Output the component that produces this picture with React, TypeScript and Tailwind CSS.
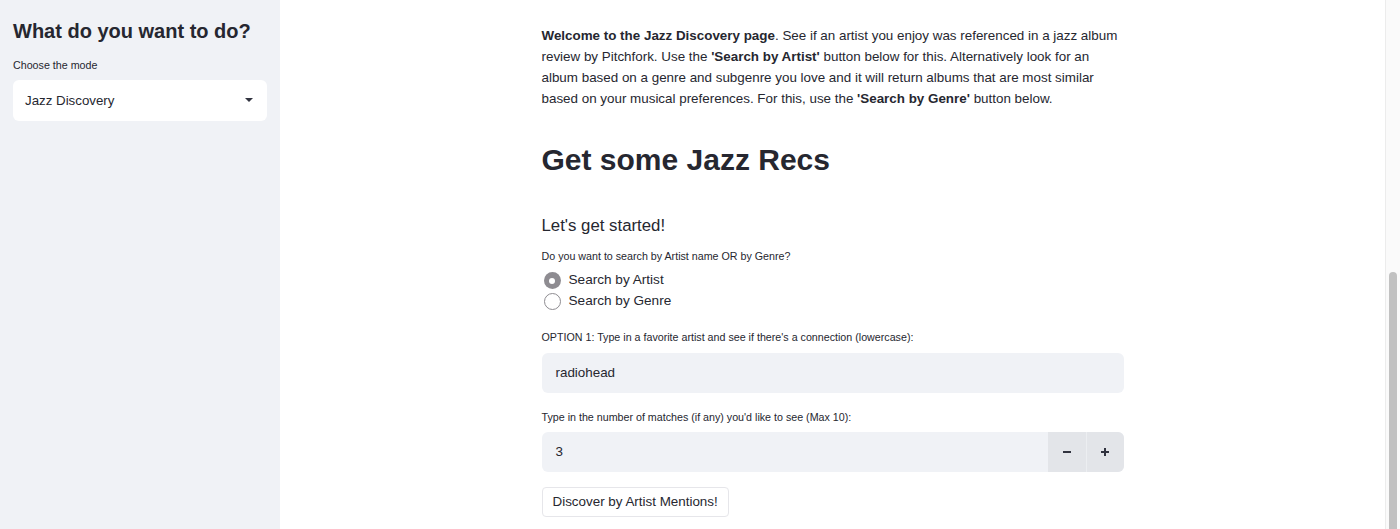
import { useState } from "react";

function Sidebar() {
  return (
    <aside className="w-[280px] shrink-0 h-[529px] bg-[#f0f2f6] px-[13px] pt-[17px]">
      <h2 className="text-[20px] leading-[28px] font-bold text-[#262730]">What do you want to do?</h2>
      <p className="mt-[12px] text-[10.7px] leading-[16px] text-[#262730]">Choose the mode</p>
      <div className="mt-[7px] h-[41px] bg-white rounded-[6px] flex items-center justify-between pl-[12px] pr-[14px]">
        <span className="text-[13.3px] text-[#262730]">Jazz Discovery</span>
        <svg width="8" height="5" viewBox="0 0 8 5">
          <path d="M0 0 L8 0 L4 4 Z" fill="#31333f" />
        </svg>
      </div>
    </aside>
  );
}

function Radio({ checked, label, onClick }: { checked: boolean; label: string; onClick: () => void }) {
  return (
    <label className="flex items-center h-[21px] gap-[8px] cursor-pointer" onClick={onClick}>
      {checked ? (
        <span className="w-[17px] h-[17px] rounded-full bg-[#8e8c91] flex items-center justify-center">
          <span className="w-[6px] h-[6px] rounded-full bg-white" />
        </span>
      ) : (
        <span className="w-[17px] h-[17px] rounded-full border border-[#8e8c91] bg-white" />
      )}
      <span className="text-[13.6px] text-[#262730]">{label}</span>
    </label>
  );
}

function Scrollbar() {
  return (
    <div className="w-[15px] shrink-0 h-[529px] border-l border-[#ececec] bg-[#fafafa] flex justify-center">
      <div className="mt-[272px] w-[8px] h-[257px] bg-[#c1c1c1] rounded-t-[4px]" />
    </div>
  );
}

export default function App() {
  const [mode, setMode] = useState("artist");
  const [count, setCount] = useState(3);

  return (
    <div
      className="w-[1400px] h-[529px] flex overflow-hidden bg-white text-[#262730]"
      style={{ fontFamily: '"Liberation Sans", Arial, sans-serif' }}
    >
      <Sidebar />
      <main className="flex-1 flex justify-center">
        <div className="w-[582px] pt-[25px]">
          <p className="text-[13.4px] leading-[21px]">
            <b>Welcome to the Jazz Discovery page</b>. See if an artist you enjoy was referenced in a jazz album review by
            Pitchfork. Use the <b>'Search by Artist'</b> button below for this. Alternatively look for an album based on a
            genre and subgenre you love and it will return albums that are most similar based on your musical preferences.
            For this, use the <b>'Search by Genre'</b> button below.
          </p>
          <h1 className="mt-[33px] text-[30px] leading-[36px] font-bold">Get some Jazz Recs</h1>
          <h3 className="mt-[35px] text-[16.8px] leading-[25px]">Let's get started!</h3>
          <p className="mt-[10px] text-[10.7px] leading-[16px]">Do you want to search by Artist name OR by Genre?</p>
          <div className="mt-[6px] pl-[2px]">
            <Radio checked={mode === "artist"} label="Search by Artist" onClick={() => setMode("artist")} />
            <Radio checked={mode === "genre"} label="Search by Genre" onClick={() => setMode("genre")} />
          </div>
          <p className="mt-[17px] text-[10.7px] leading-[16px]">
            OPTION 1: Type in a favorite artist and see if there's a connection (lowercase):
          </p>
          <div className="mt-[8px] h-[40px] bg-[#f0f2f6] rounded-[6px] flex items-center px-[14px] text-[13.4px]">
            radiohead
          </div>
          <p className="mt-[16px] text-[10.7px] leading-[16px]">
            Type in the number of matches (if any) you'd like to see (Max 10):
          </p>
          <div className="mt-[7px] h-[40px] bg-[#f0f2f6] rounded-[6px] flex items-center text-[13.4px] overflow-hidden">
            <span className="flex-1 px-[14px]">{count}</span>
            <button
              className="w-[38px] h-full bg-[#e3e5e9] flex items-center justify-center"
              onClick={() => setCount(Math.max(0, count - 1))}
            >
              <svg width="8" height="2" viewBox="0 0 8 2">
                <rect width="8" height="2" fill="#31333f" />
              </svg>
            </button>
            <button
              className="w-[38px] h-full bg-[#e3e5e9] border-l border-[#eceef1] flex items-center justify-center"
              onClick={() => setCount(Math.min(10, count + 1))}
            >
              <svg width="8" height="8" viewBox="0 0 8 8">
                <rect y="3" width="8" height="2" fill="#31333f" />
                <rect x="3" width="2" height="8" fill="#31333f" />
              </svg>
            </button>
          </div>
          <button className="mt-[15px] h-[30px] px-[10px] border border-[#e6e6ea] rounded-[4px] bg-white text-[13.4px]">
            Discover by Artist Mentions!
          </button>
        </div>
      </main>
      <Scrollbar />
    </div>
  );
}
